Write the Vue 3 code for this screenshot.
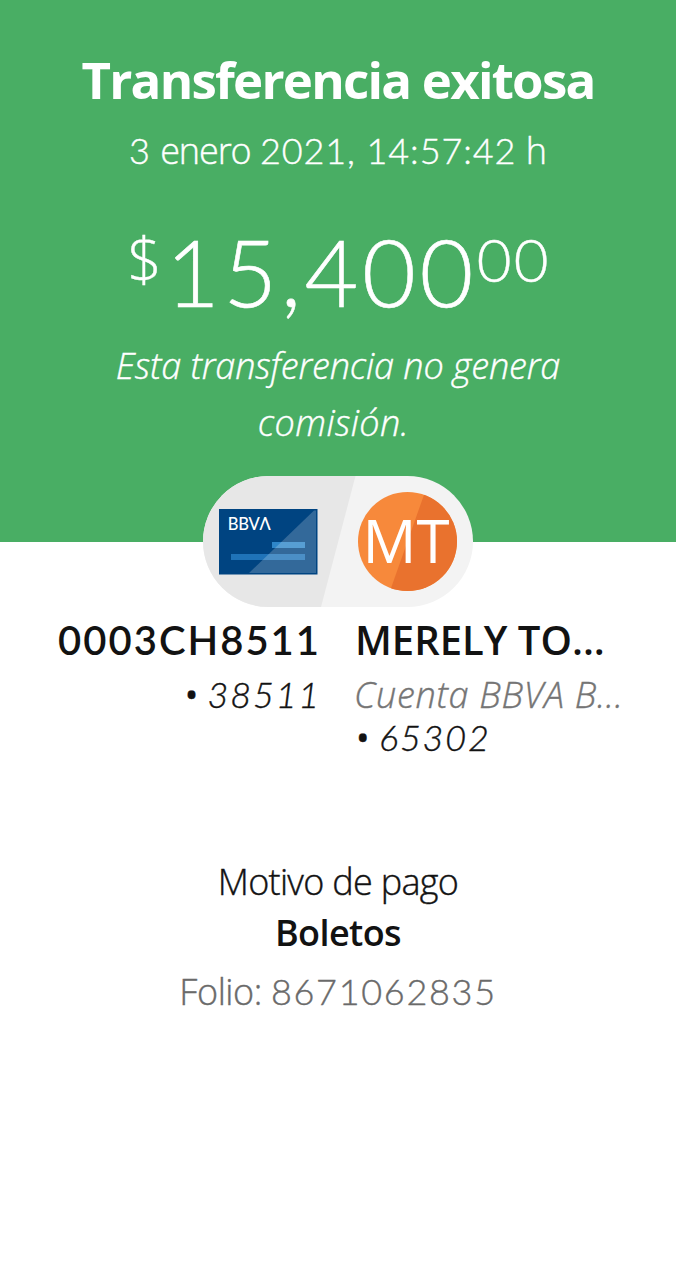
<template>
  <div class="comprobante">
    <header class="encabezado">
      <h1>Transferencia exitosa</h1>
      <p class="fecha">
        <span class="cifra">{{ operacion.dia }}</span> <span class="mes">{{ operacion.mes }}</span> <span class="cifra">{{ operacion.hora }}</span> h
      </p>
      <div class="importe">
        <span class="moneda">$</span>
        <span class="entero">{{ operacion.entero }}</span>
        <span class="centavos">{{ operacion.centavos }}</span>
      </div>
      <p class="comision">Esta transferencia no genera<br /><span class="ancha">comisión.</span></p>
    </header>

    <div class="insignia">
      <svg width="270" height="131" viewBox="0 0 270 131">
        <defs>
          <clipPath id="pastilla"><rect width="270" height="131" rx="65.5" /></clipPath>
          <clipPath id="circulo"><circle cx="204.500" cy="65.500" r="49.500" /></clipPath>
        </defs>
        <g clip-path="url(#pastilla)">
          <rect width="270" height="131" fill="#f3f3f3" />
          <path d="M0 0H152.500L118 131H0Z" fill="#e7e7e7" />
        </g>
        <!-- Tarjeta -->
        <rect x="16" y="33" width="98.500" height="65.500" fill="#004481" />
        <rect x="69" y="66" width="33" height="6" fill="#2e86c9" />
        <rect x="28" y="78" width="74" height="6" fill="#1f73b8" />
        <path d="M46 97L111 34.500H113V97Z" fill="#fff" fill-opacity="0.2" />
        <text class="marca" x="24.800" y="53.500" textLength="43">BBVΛ</text>
        <!-- Avatar -->
        <g clip-path="url(#circulo)">
          <rect x="155" y="16" width="99" height="99" fill="#f7893b" />
          <path d="M222 16H254V115H187Z" fill="#e9722e" />
        </g>
        <text class="iniciales" x="159.500" y="87">M</text>
        <text class="iniciales" x="213.500" y="87">T</text>
      </svg>
    </div>

    <section class="cuentas">
      <div class="origen">
        <h2>{{ origen.nombre }}</h2>
        <p><span class="punto">•</span> <span class="numero">{{ origen.numero }}</span></p>
      </div>
      <div class="destino">
        <h2>{{ destino.nombre }}</h2>
        <p class="tipo">{{ destino.tipo }}</p>
        <p><span class="punto">•</span> <span class="numero">{{ destino.numero }}</span></p>
      </div>
    </section>

    <section class="detalle">
      <p class="motivo">Motivo de pago</p>
      <p class="concepto">{{ operacion.motivo }}</p>
      <p class="folio">Folio: <span class="numero">{{ operacion.folio }}</span></p>
    </section>
  </div>
</template>

<script setup>
import { reactive } from 'vue'

const operacion = reactive({
  dia: '3',
  mes: 'enero',
  hora: '2021, 14:57:42',
  entero: '15,400',
  centavos: '00',
  motivo: 'Boletos',
  folio: '8671062835'
})

const origen = reactive({ nombre: '0003CH8511', numero: '38511' })
const destino = reactive({ nombre: 'MERELY TO...', tipo: 'Cuenta BBVA B...', numero: '65302' })
</script>

<style>
body {
  margin: 0;
  background: #fff;
}
</style>

<style scoped>
.comprobante {
  width: 676px;
  min-height: 1280px;
  background: #fff;
  color: #121212;
  font-family: "Open Sans", "Noto Sans", sans-serif;
  font-weight: 300;
  white-space: nowrap;
  -webkit-text-stroke-width: 0.4px;
}

h1, h2, p {
  margin: 0;
}

/* Las cifras llevan el 1 con base */
.cifra, .entero, .centavos, .numero, .origen h2 {
  font-family: Lato, "Open Sans", sans-serif;
}

.encabezado {
  box-sizing: border-box;
  height: 542px;
  padding-top: 49px;
  background: #49ae64;
  color: #fff;
  text-align: center;
}

h1 {
  font-size: 51px;
  line-height: 60px;
  font-weight: 700;
  letter-spacing: -1.75px;
  -webkit-text-stroke-width: 0;
}

.fecha {
  margin-top: 18px;
  font-size: 36px;
  line-height: 46px;
}

.fecha .cifra {
  letter-spacing: 0.9px;
}

.fecha .mes {
  letter-spacing: -1.1px;
}

.importe {
  display: flex;
  justify-content: center;
  align-items: flex-start;
  margin-top: 47px;
  height: 100px;
}

.moneda {
  margin-right: 4px;
  font-size: 60px;
  line-height: 77px;
}

.entero {
  font-size: 93px;
  line-height: 100px;
  letter-spacing: 3.5px;
  -webkit-text-stroke-width: 0.6px;
}

.centavos {
  font-size: 60px;
  line-height: 76px;
  letter-spacing: 2px;
  margin-right: -2px;
}

.comision {
  margin-top: 16px;
  font-size: 36px;
  line-height: 57px;
  font-style: italic;
  letter-spacing: -0.1px;
}

.comision .ancha {
  padding-right: 9px;
  letter-spacing: 0.4px;
}

.insignia {
  display: flex;
  justify-content: center;
  height: 131px;
  margin-top: -66px;
}

.insignia svg {
  position: relative;
  -webkit-text-stroke-width: 0;
}

.marca {
  font-family: Lato, sans-serif;
  font-size: 16.5px;
  font-weight: 500;
  fill: #fff;
}

.iniciales {
  font-size: 60px;
  font-weight: 400;
  fill: #fff;
}

.cuentas {
  display: flex;
  gap: 37px;
  margin-top: 9px;
  height: 143px;
}

.origen {
  width: 319px;
  text-align: right;
}

h2 {
  margin-bottom: 9px;
  font-size: 40px;
  line-height: 48px;
  font-weight: 600;
  -webkit-text-stroke-width: 0;
}

.origen h2 {
  margin-right: -2px;
  letter-spacing: 2px;
}

.destino h2 {
  margin-left: -1px;
}

.cuentas p {
  font-size: 36px;
  line-height: 43px;
  font-style: italic;
}

.cuentas .numero {
  letter-spacing: 1.8px;
}

.origen p {
  margin-right: -2px;
}

.cuentas .tipo {
  margin-left: -2px;
  letter-spacing: 0.7px;
  color: #757575;
}

.punto {
  font-style: normal;
  font-weight: 400;
}

.detalle {
  margin-top: 101px;
  font-size: 36px;
  line-height: 43px;
  text-align: center;
}

.motivo {
  letter-spacing: -0.7px;
}

.concepto {
  margin-top: 8px;
  font-weight: 600;
  letter-spacing: -0.6px;
  -webkit-text-stroke-width: 0;
}

.folio {
  margin-top: 16px;
  color: #6a6a6a;
  letter-spacing: -0.4px;
}

.folio .numero {
  letter-spacing: 1.7px;
}
</style>
